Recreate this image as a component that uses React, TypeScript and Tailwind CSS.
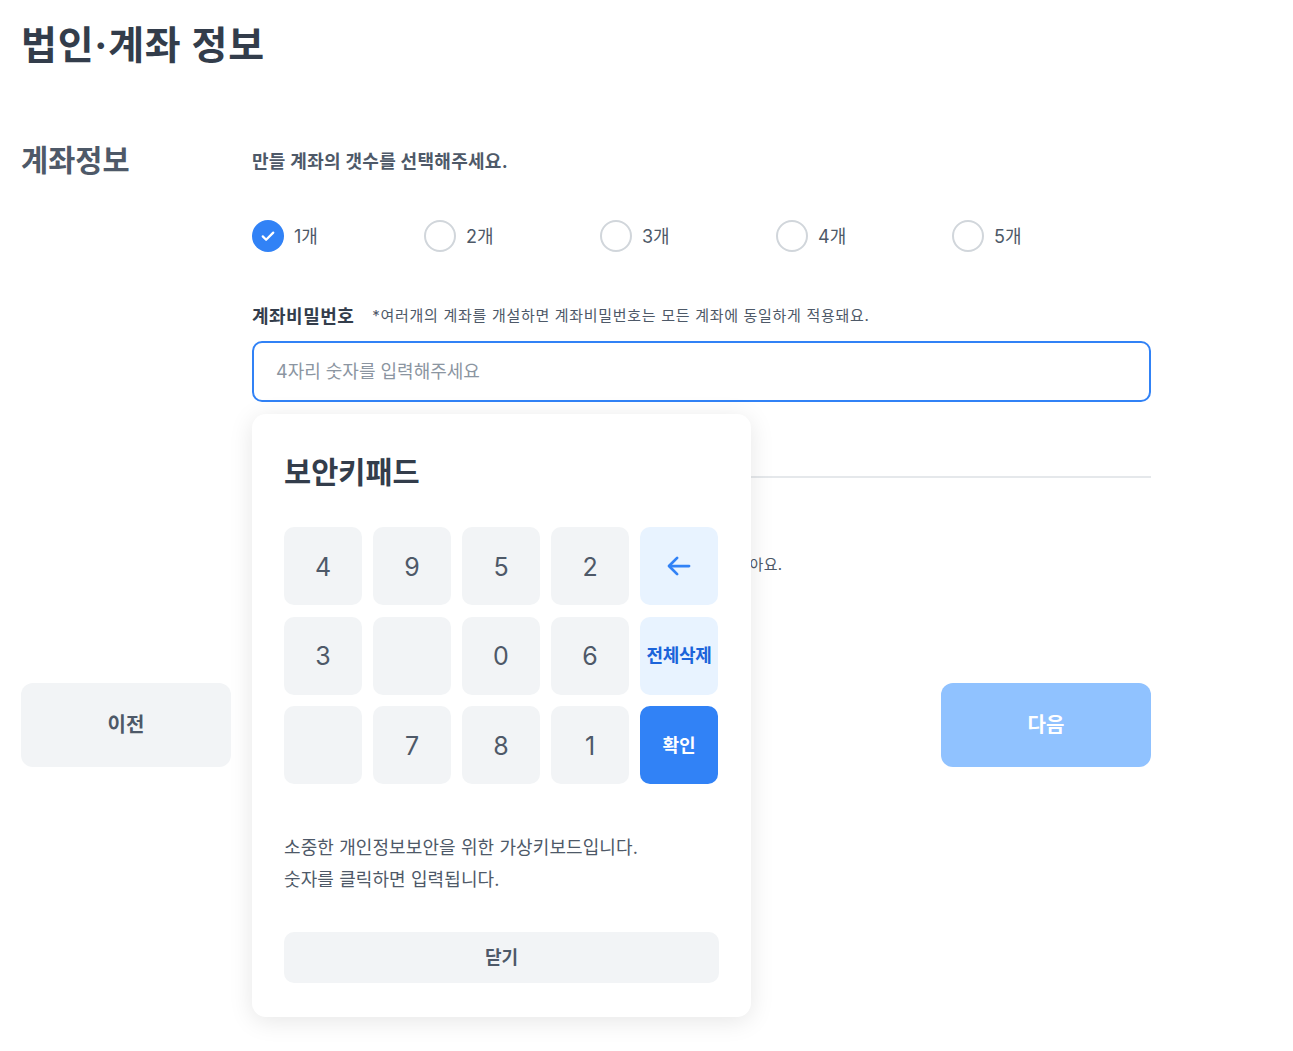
import React from "react";

const FONT = { fontFamily: 'Inter, "Noto Sans CJK KR", sans-serif' };

function Check() {
  return (
    <svg width="18" height="18" viewBox="0 0 24 24" fill="none" stroke="white" strokeWidth="3" strokeLinecap="round" strokeLinejoin="round">
      <path d="M5 12.5l4.5 4.5L19 7.5" />
    </svg>
  );
}

function ArrowLeft() {
  return (
    <svg width="30" height="30" viewBox="0 0 24 24" fill="none" stroke="#3182f6" strokeWidth="2.2" strokeLinecap="round" strokeLinejoin="round">
      <path d="M20 12H4.5" />
      <path d="M10.5 5.5L4 12l6.5 6.5" />
    </svg>
  );
}

const counts = ["1개", "2개", "3개", "4개", "5개"];

function Key({ label }: { label: string }) {
  return (
    <div className="w-[78px] h-[78px] rounded-[10px] bg-[#f2f4f6] flex items-center justify-center pt-[3px] text-[25px] text-[#4e5968]">
      {label}
    </div>
  );
}

export default function App() {
  return (
    <div style={FONT} className="relative w-[1293px] h-[1051px] bg-white overflow-hidden">
      <div className="px-[21px] w-[1172px]">
        <h1 className="pt-[18px] leading-[54px] text-[39px] font-bold text-[#333d4b] tracking-[0.8px]">법인·계좌 정보</h1>

        <div className="mt-[68px] flex">
          <div className="w-[231px] text-[29.5px] leading-[40px] font-bold text-[#4e5968]">계좌정보</div>
          <div className="w-[899px]">
            <div className="pt-[9px] text-[18px] leading-[26px] font-bold text-[#4e5968] tracking-[0.3px]">만들 계좌의 갯수를 선택해주세요.</div>
            <div className="mt-[45px] flex h-[32px]">
              {counts.map((c, i) => (
                <div key={c} className={i === 0 ? "w-[172px] flex items-center" : "w-[176px] flex items-center"}>
                  {i === 0 ? (
                    <div className="w-[32px] h-[32px] rounded-full bg-[#3182f6] flex items-center justify-center">
                      <Check />
                    </div>
                  ) : (
                    <div className="w-[32px] h-[32px] rounded-full border-2 border-[#d1d6db] bg-white" />
                  )}
                  <span className="ml-[10px] text-[18px] text-[#4e5968]">{c}</span>
                </div>
              ))}
            </div>

            <div className="mt-[51px] flex items-center h-[26px]">
              <span className="text-[18px] font-bold text-[#333d4b] tracking-[0.5px]">계좌비밀번호</span>
              <span className="ml-[18px] text-[15px] text-[#4e5968] tracking-[0.7px]">*여러개의 계좌를 개설하면 계좌비밀번호는 모든 계좌에 동일하게 적용돼요.</span>
            </div>
            <div className="mt-[12px] h-[61px] rounded-[10px] border-2 border-[#3182f6] flex items-center px-[22px] text-[18px] text-[#8b95a1]">
              4자리 숫자를 입력해주세요
            </div>

            <div className="mt-[74px] h-[2px] bg-[#e5e8eb]" />
            <div className="mt-[76px] h-[22px] text-[15px] leading-[22px] text-[#4e5968] whitespace-nowrap tracking-[0.25px]">
              *계좌비밀번호는 연속된 숫자처럼 추측하기 쉬운 번호로 설정하지 않는 것이 좋아요.
            </div>
          </div>
        </div>

        <div className="mt-[107px] flex justify-between w-[1130px]">
          <div className="w-[210px] h-[84px] rounded-[12px] bg-[#f2f4f6] flex items-center justify-center text-[20px] font-bold text-[#4e5968]">이전</div>
          <div className="w-[210px] h-[84px] rounded-[12px] bg-[#90c2ff] flex items-center justify-center text-[20px] font-bold text-white">다음</div>
        </div>
      </div>

      <div className="absolute left-[252px] top-[414px] w-[499px] rounded-[14px] bg-white shadow-[0_4px_24px_rgba(0,0,0,0.1)] px-[32px] pt-[38px] pb-[34px]">
        <div className="text-[29.5px] leading-[40px] font-bold text-[#333d4b]">보안키패드</div>
        <div className="mt-[35px] grid grid-cols-[repeat(5,78px)] gap-x-[11px] gap-y-[11.5px]">
          <Key label="4" />
          <Key label="9" />
          <Key label="5" />
          <Key label="2" />
          <div className="w-[78px] h-[78px] rounded-[10px] bg-[#e8f3ff] flex items-center justify-center">
            <ArrowLeft />
          </div>
          <Key label="3" />
          <Key label="" />
          <Key label="0" />
          <Key label="6" />
          <div className="w-[78px] h-[78px] rounded-[10px] bg-[#e8f3ff] flex items-center justify-center text-[18px] font-bold text-[#1b64da] tracking-[-0.3px]">전체삭제</div>
          <Key label="" />
          <Key label="7" />
          <Key label="8" />
          <Key label="1" />
          <div className="w-[78px] h-[78px] rounded-[10px] bg-[#3182f6] flex items-center justify-center text-[18px] font-bold text-white">확인</div>
        </div>
        <div className="mt-[48px] text-[18px] leading-[32px] text-[#4e5968] tracking-[0.1px]">
          <div>소중한 개인정보보안을 위한 가상키보드입니다.</div>
          <div>숫자를 클릭하면 입력됩니다.</div>
        </div>
        <div className="mt-[36px] h-[51px] rounded-[10px] bg-[#f2f4f6] flex items-center justify-center text-[18px] font-bold text-[#4e5968]">닫기</div>
      </div>
    </div>
  );
}
